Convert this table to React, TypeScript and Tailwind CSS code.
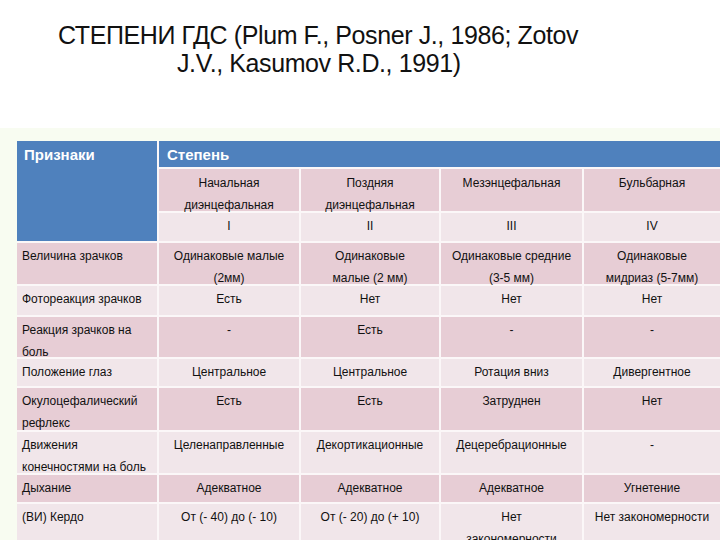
import React from 'react';

const rows: { label: React.ReactNode; cells: React.ReactNode[]; tone: 'pink' | 'light' }[] = [
  {
    label: 'Величина зрачков',
    cells: [
      <>Одинаковые малые<br />(2мм)</>,
      <>Одинаковые<br />малые (2 мм)</>,
      <>Одинаковые средние<br />(3-5 мм)</>,
      <>Одинаковые<br />мидриаз (5-7мм)</>,
    ],
    tone: 'pink',
  },
  { label: 'Фотореакция зрачков', cells: ['Есть', 'Нет', 'Нет', 'Нет'], tone: 'light' },
  { label: <>Реакция зрачков на<br />боль</>, cells: ['-', 'Есть', '-', '-'], tone: 'pink' },
  { label: 'Положение глаз', cells: ['Центральное', 'Центральное', 'Ротация вниз', 'Дивергентное'], tone: 'light' },
  { label: <>Окулоцефалический<br />рефлекс</>, cells: ['Есть', 'Есть', 'Затруднен', 'Нет'], tone: 'pink' },
  {
    label: <>Движения<br />конечностями на боль</>,
    cells: ['Целенаправленные', 'Декортикационные', 'Децеребрационные', '-'],
    tone: 'light',
  },
  { label: 'Дыхание', cells: ['Адекватное', 'Адекватное', 'Адекватное', 'Угнетение'], tone: 'pink' },
  {
    label: '(ВИ) Кердо',
    cells: ['От (- 40) до (- 10)', 'От (- 20) до (+ 10)', <>Нет<br />закономерности</>, 'Нет закономерности'],
    tone: 'light',
  },
];

const toneBg = { pink: 'bg-[#e7cdd5]', light: 'bg-[#f1e6ea]' };

export default function App() {
  return (
    <div className="w-[720px] h-[540px] overflow-hidden bg-white font-['Liberation_Sans',Arial,sans-serif] text-[#111]">
      {/* Title */}
      <div className="h-[128px] pt-[21px] text-[25px] leading-[28px] tracking-[-0.4px] whitespace-nowrap">
        <div className="ml-[58px]">СТЕПЕНИ ГДС (Plum F., Posner J., 1986; Zotov</div>
        <div className="ml-[177px]">J.V., Kasumov R.D., 1991)</div>
      </div>

      {/* Table area */}
      <div className="h-[412px] bg-[#f8fcf1] pt-[13px] pl-[17px]">
        <div className="grid grid-cols-[140px_140px_138px_141px_1fr] grid-rows-[26px_42px_28px_41px_29px_40px_27px_42px_41px_27px_60px] gap-[2px] bg-[#fbf7f8] text-[12px] leading-[22px]">
          <div className="row-span-3 bg-[#4f81bd] pl-[7px] pt-[3px] text-[15px] font-bold text-white">Признаки</div>
          <div className="col-span-4 bg-[#4f81bd] pl-[8px] pt-[3px] text-[15px] font-bold text-white">Степень</div>

          <div className="bg-[#e7cdd5] pt-[3px] text-center">Начальная<br />диэнцефальная</div>
          <div className="bg-[#e7cdd5] pt-[3px] text-center">Поздняя<br />диэнцефальная</div>
          <div className="bg-[#e7cdd5] pt-[3px] text-center">Мезэнцефальная</div>
          <div className="bg-[#e7cdd5] pt-[3px] text-center">Бульбарная</div>

          <div className="bg-[#f1e6ea] pt-[2px] text-center">I</div>
          <div className="bg-[#f1e6ea] pt-[2px] text-center">II</div>
          <div className="bg-[#f1e6ea] pt-[2px] text-center">III</div>
          <div className="bg-[#f1e6ea] pt-[2px] text-center">IV</div>

          {rows.map((r, i) => (
            <React.Fragment key={i}>
              <div className={`${toneBg[r.tone]} pl-[5px] pt-[2px] whitespace-nowrap`}>{r.label}</div>
              {r.cells.map((c, j) => (
                <div key={j} className={`${toneBg[r.tone]} pt-[2px] text-center whitespace-nowrap`}>
                  {c}
                </div>
              ))}
            </React.Fragment>
          ))}
        </div>
      </div>
    </div>
  );
}
